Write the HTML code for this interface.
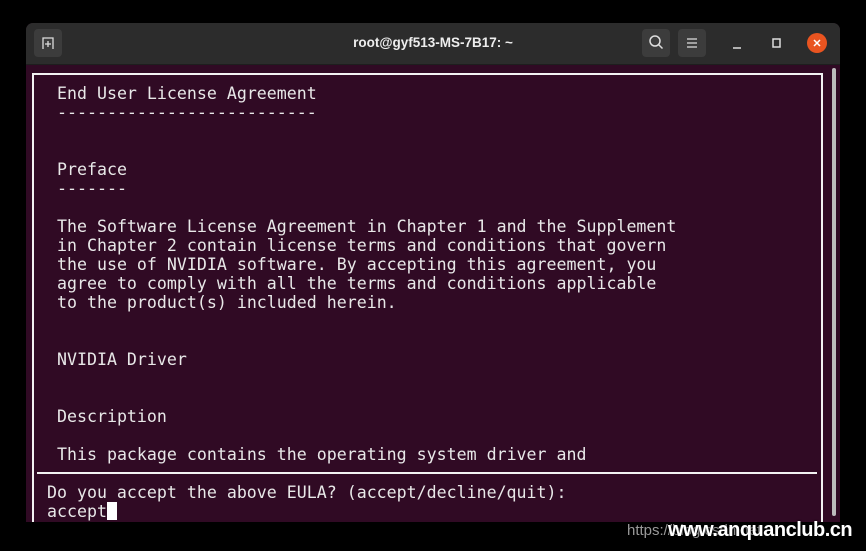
<!DOCTYPE html>
<html><head><style>
body{margin:0;width:866px;height:551px;background:#000;position:relative;overflow:hidden;font-family:"DejaVu Sans Mono","Liberation Mono",monospace}
.win{position:absolute;left:26px;top:23px;width:814px;height:499px;background:#300a24;border-radius:7px 7px 0 0;overflow:hidden}
.tb{position:absolute;left:0;top:0;width:814px;height:41px;background:#2c2c2c;border-bottom:1px solid #1e1e1e}
.title{position:absolute;left:0;right:0;top:12px;text-align:center;color:#eee;font:bold 13.5px "Liberation Sans",sans-serif}
.btn{position:absolute;top:6px;width:28px;height:28px;background:#3c3c3c;border-radius:4px}
.box{position:absolute;left:6px;top:50px;width:787px;height:460px;border:2px solid #f2f2f2}
.hl{position:absolute;left:11px;top:449px;width:780px;height:2px;background:#f2f2f2}
.sb{position:absolute;left:806px;top:45px;width:4px;height:448px;background:#bbb;border-radius:2px}
pre{position:absolute;margin:0;color:#e8e8e8;font-size:16.6px;line-height:19px;font-family:"DejaVu Sans Mono",monospace}
.cur{display:inline-block;width:10px;height:18px;background:#fff;vertical-align:-3px}
</style></head><body>
<div class="win">
<div class="tb">
<div class="btn" style="left:8px"><svg width="28" height="28"><path d="M9 20V9h10v11M14 12v6M11 15h6" stroke="#ddd" stroke-width="1.3" fill="none"/></svg></div>
<div class="title">root@gyf513-MS-7B17: ~</div>
<div class="btn" style="left:616px"><svg width="28" height="28"><circle cx="13" cy="12" r="5" stroke="#ddd" stroke-width="1.5" fill="none"/><path d="M16.5 15.5l4 4" stroke="#ddd" stroke-width="1.5"/></svg></div>
<div class="btn" style="left:652px"><svg width="28" height="28"><path d="M9 10h10M9 14h10M9 18h10" stroke="#ddd" stroke-width="1.3"/></svg></div>
<svg style="position:absolute;left:700px;top:10px" width="110" height="24"><path d="M7 15h8" stroke="#ddd" stroke-width="1.5"/><rect x="47" y="6" width="7" height="8" stroke="#ddd" stroke-width="1.5" fill="none"/><circle cx="91" cy="10" r="10" fill="#e95420"/><path d="M88 7l6 6M94 7l-6 6" stroke="#fff" stroke-width="1.5"/></svg>
</div>
<div class="box"></div>
<div class="hl"></div>
<div class="sb"></div>
<pre style="left:31px;top:61px">End User License Agreement
--------------------------


Preface
-------

The Software License Agreement in Chapter 1 and the Supplement
in Chapter 2 contain license terms and conditions that govern
the use of NVIDIA software. By accepting this agreement, you
agree to comply with all the terms and conditions applicable
to the product(s) included herein.


NVIDIA Driver


Description

This package contains the operating system driver and</pre>
<pre style="left:21px;top:460px">Do you accept the above EULA? (accept/decline/quit):
accept<span class="cur"></span></pre>
</div>
<div style="position:absolute;left:627px;top:522px;color:#999;font:15px 'Liberation Sans',sans-serif">https://blog.csdn.net</div>
<div style="position:absolute;left:668px;top:519px;color:#fff;font:bold 20px 'Liberation Sans',sans-serif;letter-spacing:-0.5px;text-shadow:0 0 2px #000">www.anquanclub.cn</div>
</body></html>
